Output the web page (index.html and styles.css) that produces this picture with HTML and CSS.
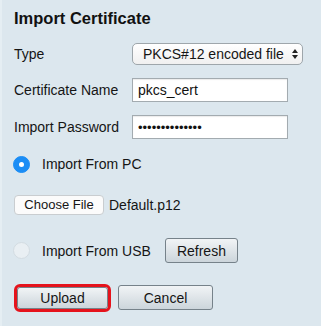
FILE: index.html
```html
<!DOCTYPE html>
<html>
<head>
<meta charset="utf-8">
<link rel="stylesheet" href="styles.css">
</head>
<body>
<div class="panel">
  <h2 class="title">Import Certificate</h2>
  <div class="row row-type">
    <span class="label">Type</span>
    <div class="select">
      <span>PKCS#12 encoded file</span>
      <svg class="arrows" width="8" height="12" viewBox="0 0 8 12"><path d="M4 1 L7 5 H1 Z M4 11 L7 7 H1 Z" fill="#222"/></svg>
    </div>
  </div>
  <div class="row row-input">
    <span class="label">Certificate Name</span>
    <input class="text" type="text" value="pkcs_cert">
  </div>
  <div class="row row-input">
    <span class="label">Import Password</span>
    <input class="text pwd" type="password" value="abcdefghijklmn">
  </div>
  <div class="radio-row row-pc">
    <span class="radio checked"></span>
    <span>Import From PC</span>
  </div>
  <div class="file-row">
    <span class="choose">Choose File</span>
    <span class="filename">Default.p12</span>
  </div>
  <div class="radio-row row-usb">
    <span class="radio"></span>
    <span>Import From USB</span>
    <button class="btn refresh">Refresh</button>
  </div>
  <div class="actions">
    <button class="btn upload">Upload</button>
    <button class="btn cancel">Cancel</button>
  </div>
</div>
</body>
</html>
```
FILE: styles.css
```css
html, body {
  margin: 0;
  padding: 0;
}
body {
  background: #dce7ee;
  font-family: "Liberation Sans", Arial, sans-serif;
  font-size: 14px;
  color: #151515;
  width: 321px;
  height: 326px;
  overflow: hidden;
}
.panel {
  padding: 8px 0 0 12px;
  border-left: 2px solid #e5eef3;
  height: 318px;
}
.title {
  margin: 0 0 15px 0;
  font-size: 16.5px;
  font-weight: bold;
  line-height: 20px;
  height: 20px;
  color: #111;
}
.row {
  display: grid;
  grid-template-columns: 118px auto;
  align-items: center;
}
.row-type {
  height: 22px;
  margin-bottom: 13px;
}
.row-input {
  height: 24px;
  margin-bottom: 13px;
}
.select {
  box-sizing: border-box;
  width: 171px;
  height: 22px;
  border: 1px solid #9ea6ab;
  border-radius: 5px;
  background: linear-gradient(#ffffff, #f0f0f0);
  display: flex;
  align-items: center;
  justify-content: space-between;
  padding: 0 3px 0 10px;
  font-size: 14px;
}
.arrows {
  display: block;
}
.text {
  box-sizing: border-box;
  width: 156px;
  height: 24px;
  border: 1px solid #a3abb0;
  background: #fff;
  padding: 0 5px;
  font-family: "Liberation Sans", Arial, sans-serif;
  font-size: 14px;
  color: #111;
  box-shadow: inset 0 1px 1px rgba(0,0,0,0.08);
  outline: none;
  margin: 0;
}
.pwd {
  font-size: 13px;
}
.radio-row {
  display: flex;
  align-items: center;
}
.row-pc {
  height: 24px;
  margin-bottom: 19px;
}
.radio {
  box-sizing: border-box;
  width: 17px;
  height: 17px;
  border-radius: 50%;
  margin-left: -1px;
  margin-right: 12px;
  background: #e9eff3;
  border: 1px solid #d3dce2;
  position: relative;
}
.radio.checked {
  background: #1b8df5;
  border-color: #1b8df5;
}
.radio.checked::after {
  content: "";
  position: absolute;
  left: 5px;
  top: 5px;
  width: 5px;
  height: 5px;
  border-radius: 50%;
  background: #fff;
}
.file-row {
  display: flex;
  align-items: center;
  height: 20px;
  margin-bottom: 23px;
}
.choose {
  box-sizing: border-box;
  width: 90px;
  height: 20px;
  border: 1px solid #c9cdd0;
  border-radius: 4px;
  background: #fbfbfb;
  font-size: 13px;
  line-height: 18px;
  text-align: center;
  margin-right: 5px;
}
.filename {
  font-size: 14px;
}
.row-usb {
  height: 25px;
  margin-bottom: 20px;
}
.btn {
  box-sizing: border-box;
  font-family: "Liberation Sans", Arial, sans-serif;
  font-size: 14px;
  color: #151515;
  border: 1px solid #76828a;
  border-radius: 3px;
  background: linear-gradient(#f1f4f6, #ccd5db);
  padding: 0;
  margin: 0;
}
.refresh {
  width: 73px;
  height: 25px;
  margin-left: 14px;
}
.actions {
  display: flex;
  align-items: flex-start;
  height: 30px;
}
.upload {
  width: 91px;
  height: 22px;
  margin: 4px 0 0 3px;
  outline: 3.5px solid #e5131c;
  outline-offset: 0.5px;
  border-radius: 3px;
}
.cancel {
  width: 95px;
  height: 25px;
  margin: 2px 0 0 10px;
}
```
